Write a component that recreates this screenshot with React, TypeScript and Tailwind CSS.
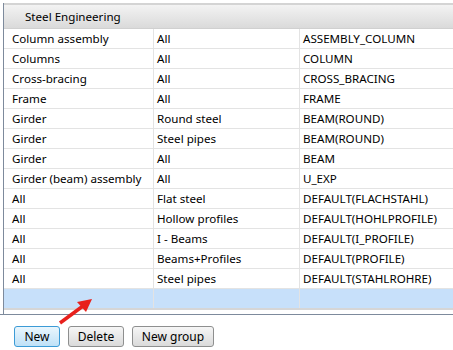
import React from "react";

const rows: [string, string, string][] = [
  ["Column assembly", "All", "ASSEMBLY_COLUMN"],
  ["Columns", "All", "COLUMN"],
  ["Cross-bracing", "All", "CROSS_BRACING"],
  ["Frame", "All", "FRAME"],
  ["Girder", "Round steel", "BEAM(ROUND)"],
  ["Girder", "Steel pipes", "BEAM(ROUND)"],
  ["Girder", "All", "BEAM"],
  ["Girder (beam) assembly", "All", "U_EXP"],
  ["All", "Flat steel", "DEFAULT(FLACHSTAHL)"],
  ["All", "Hollow profiles", "DEFAULT(HOHLPROFILE)"],
  ["All", "I - Beams", "DEFAULT(I_PROFILE)"],
  ["All", "Beams+Profiles", "DEFAULT(PROFILE)"],
  ["All", "Steel pipes", "DEFAULT(STAHLROHRE)"],
];

function Row({ cells, selected }: { cells: [string, string, string]; selected?: boolean }) {
  return (
    <div className={`flex h-[20px] border-b border-[#e3e3e3] ${selected ? "bg-[#c7e0fa]" : ""}`}>
      <div className="w-[150px] shrink-0 border-r border-[#e3e3e3] pl-[8px] leading-[19px]">{cells[0]}</div>
      <div className="w-[146px] shrink-0 border-r border-[#e3e3e3] pl-[3px] leading-[19px]">{cells[1]}</div>
      <div className="flex-1 pl-[3px] leading-[19px]">{cells[2]}</div>
    </div>
  );
}

function Btn({ children, w, active }: { children: React.ReactNode; w: string; active?: boolean }) {
  return (
    <div
      className={`${w} h-[21px] flex items-center justify-center rounded-[3px] border ${
        active
          ? "border-[#3c9bd6] bg-gradient-to-b from-[#eaf6fd] to-[#bfe1f7]"
          : "border-[#8e8f8f] bg-gradient-to-b from-[#f6f6f6] to-[#dadada]"
      } text-[12px] text-black`}
    >
      {children}
    </div>
  );
}

export default function App() {
  return (
    <div
      className="relative w-[453px] h-[350px] bg-white overflow-hidden text-[11.6px] text-black"
      style={{ fontFamily: '"Noto Sans", "Open Sans", sans-serif' }}
    >
      <div className="pt-[3px] pl-[3px]">
        <div className="border-l border-[#7d8a9c] h-[311px] flex flex-col">
          <div className="h-[2px] bg-[#d4d4d4]" />
          <div className="h-[24px] flex items-center bg-gradient-to-b from-[#f3f3f3] to-[#dadada] border-b border-[#d0d0d0]">
            <div className="w-[21px] shrink-0" />
            <span>Steel Engineering</span>
          </div>
          {rows.map((r, i) => (
            <Row key={i} cells={r} />
          ))}
          <Row cells={["", "", ""]} selected />
          <div className="h-[2px] bg-[#d6d6d6] -mt-[1px]" />
        </div>
        <div className="h-px bg-[#7d8a9c] -ml-[3px]" />
      </div>
      <div className="flex gap-[8px] pl-[14px] pt-[11px]">
        <Btn w="w-[46px]" active>New</Btn>
        <Btn w="w-[56px]">Delete</Btn>
        <Btn w="w-[82px]">New group</Btn>
      </div>
      <svg className="absolute left-0 top-0" width="453" height="350">
        <line x1="60" y1="323" x2="83" y2="306" stroke="#e8201c" strokeWidth="3.5" />
        <polygon points="92,299 77,302 86,312" fill="#e8201c" />
      </svg>
    </div>
  );
}
